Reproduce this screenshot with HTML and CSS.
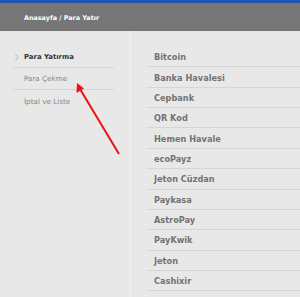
FILE: index.html
```html
<!DOCTYPE html>
<html lang="tr">
<head>
    <meta charset="UTF-8">
    <title>Para Yatır</title>
    <link rel="stylesheet" href="styles.css">
</head>
<body>
    <div class="top-bar"></div>
    <div class="page-header">
        <div class="breadcrumb">Anasayfa / Para Yatır</div>
    </div>

    <div class="page-body">
        <aside class="side-nav">
            <a class="side-item active" href="#">
                <svg class="chevron" width="4" height="7" viewBox="0 0 4 7"><path d="M0.5 0.5 L3.3 3.5 L0.5 6.5" fill="none" stroke="#aaa" stroke-width="0.9"/></svg>
                Para Yatırma
            </a>
            <a class="side-item" href="#">Para Çekme</a>
            <a class="side-item last" href="#">İptal ve Liste</a>
        </aside>

        <ul class="method-list">
            <li>Bitcoin</li>
            <li>Banka Havalesi</li>
            <li>Cepbank</li>
            <li>QR Kod</li>
            <li>Hemen Havale</li>
            <li>ecoPayz</li>
            <li>Jeton Cüzdan</li>
            <li>Paykasa</li>
            <li>AstroPay</li>
            <li>PayKwik</li>
            <li>Jeton</li>
            <li>Cashixir</li>
        </ul>
    </div>

    <!-- annotation arrow -->
    <svg class="pointer-arrow" width="300" height="297" viewBox="0 0 300 297">
        <line x1="119" y1="154" x2="80" y2="89" stroke="#f01010" stroke-width="2"/>
        <polygon points="77,83 76.5,93 84,88.5" fill="#f01010"/>
    </svg>
</body>
</html>
```

FILE: styles.css
```css
* {
    margin: 0;
    padding: 0;
    box-sizing: border-box;
}

body {
    font-family: 'DejaVu Sans', Verdana, sans-serif;
    background: #e8e8e8;
    width: 300px;
    height: 297px;
    overflow: hidden;
    position: relative;
}

.top-bar {
    height: 3px;
    background: #1d54b2;
}

.page-header {
    height: 28px;
    background: #767676;
    display: flex;
    align-items: center;
    padding-left: 24px;
}

.breadcrumb {
    color: #fff;
    font-size: 6.4px;
    font-weight: bold;
    padding-top: 1px;
}

.page-body {
    display: flex;
    height: 266px;
}

.side-nav {
    width: 131px;
    padding: 15px 16px 0 13px;
    border-right: 1px solid #efefef;
    display: flex;
    flex-direction: column;
}

.side-item {
    height: 22px;
    display: flex;
    align-items: center;
    padding-left: 11px;
    border-bottom: 1px solid #d6d6d6;
    color: #858585;
    font-size: 7.2px;
    text-decoration: none;
    position: relative;
}

.side-item.last {
    border-bottom: none;
}

.side-item.active {
    color: #333;
    font-weight: bold;
    font-size: 6.9px;
}

.chevron {
    position: absolute;
    left: 2px;
    top: 8px;
}

.method-list {
    flex: 1;
    list-style: none;
    padding: 16px 0 0 15px;
}

.method-list li {
    height: 20.36px;
    display: flex;
    align-items: center;
    padding-left: 8px;
    padding-top: 1px;
    border-bottom: 1px solid #d6d6d6;
    color: #737373;
    font-size: 8.2px;
    font-weight: bold;
}

.pointer-arrow {
    position: absolute;
    left: 0;
    top: 0;
    pointer-events: none;
}
```
